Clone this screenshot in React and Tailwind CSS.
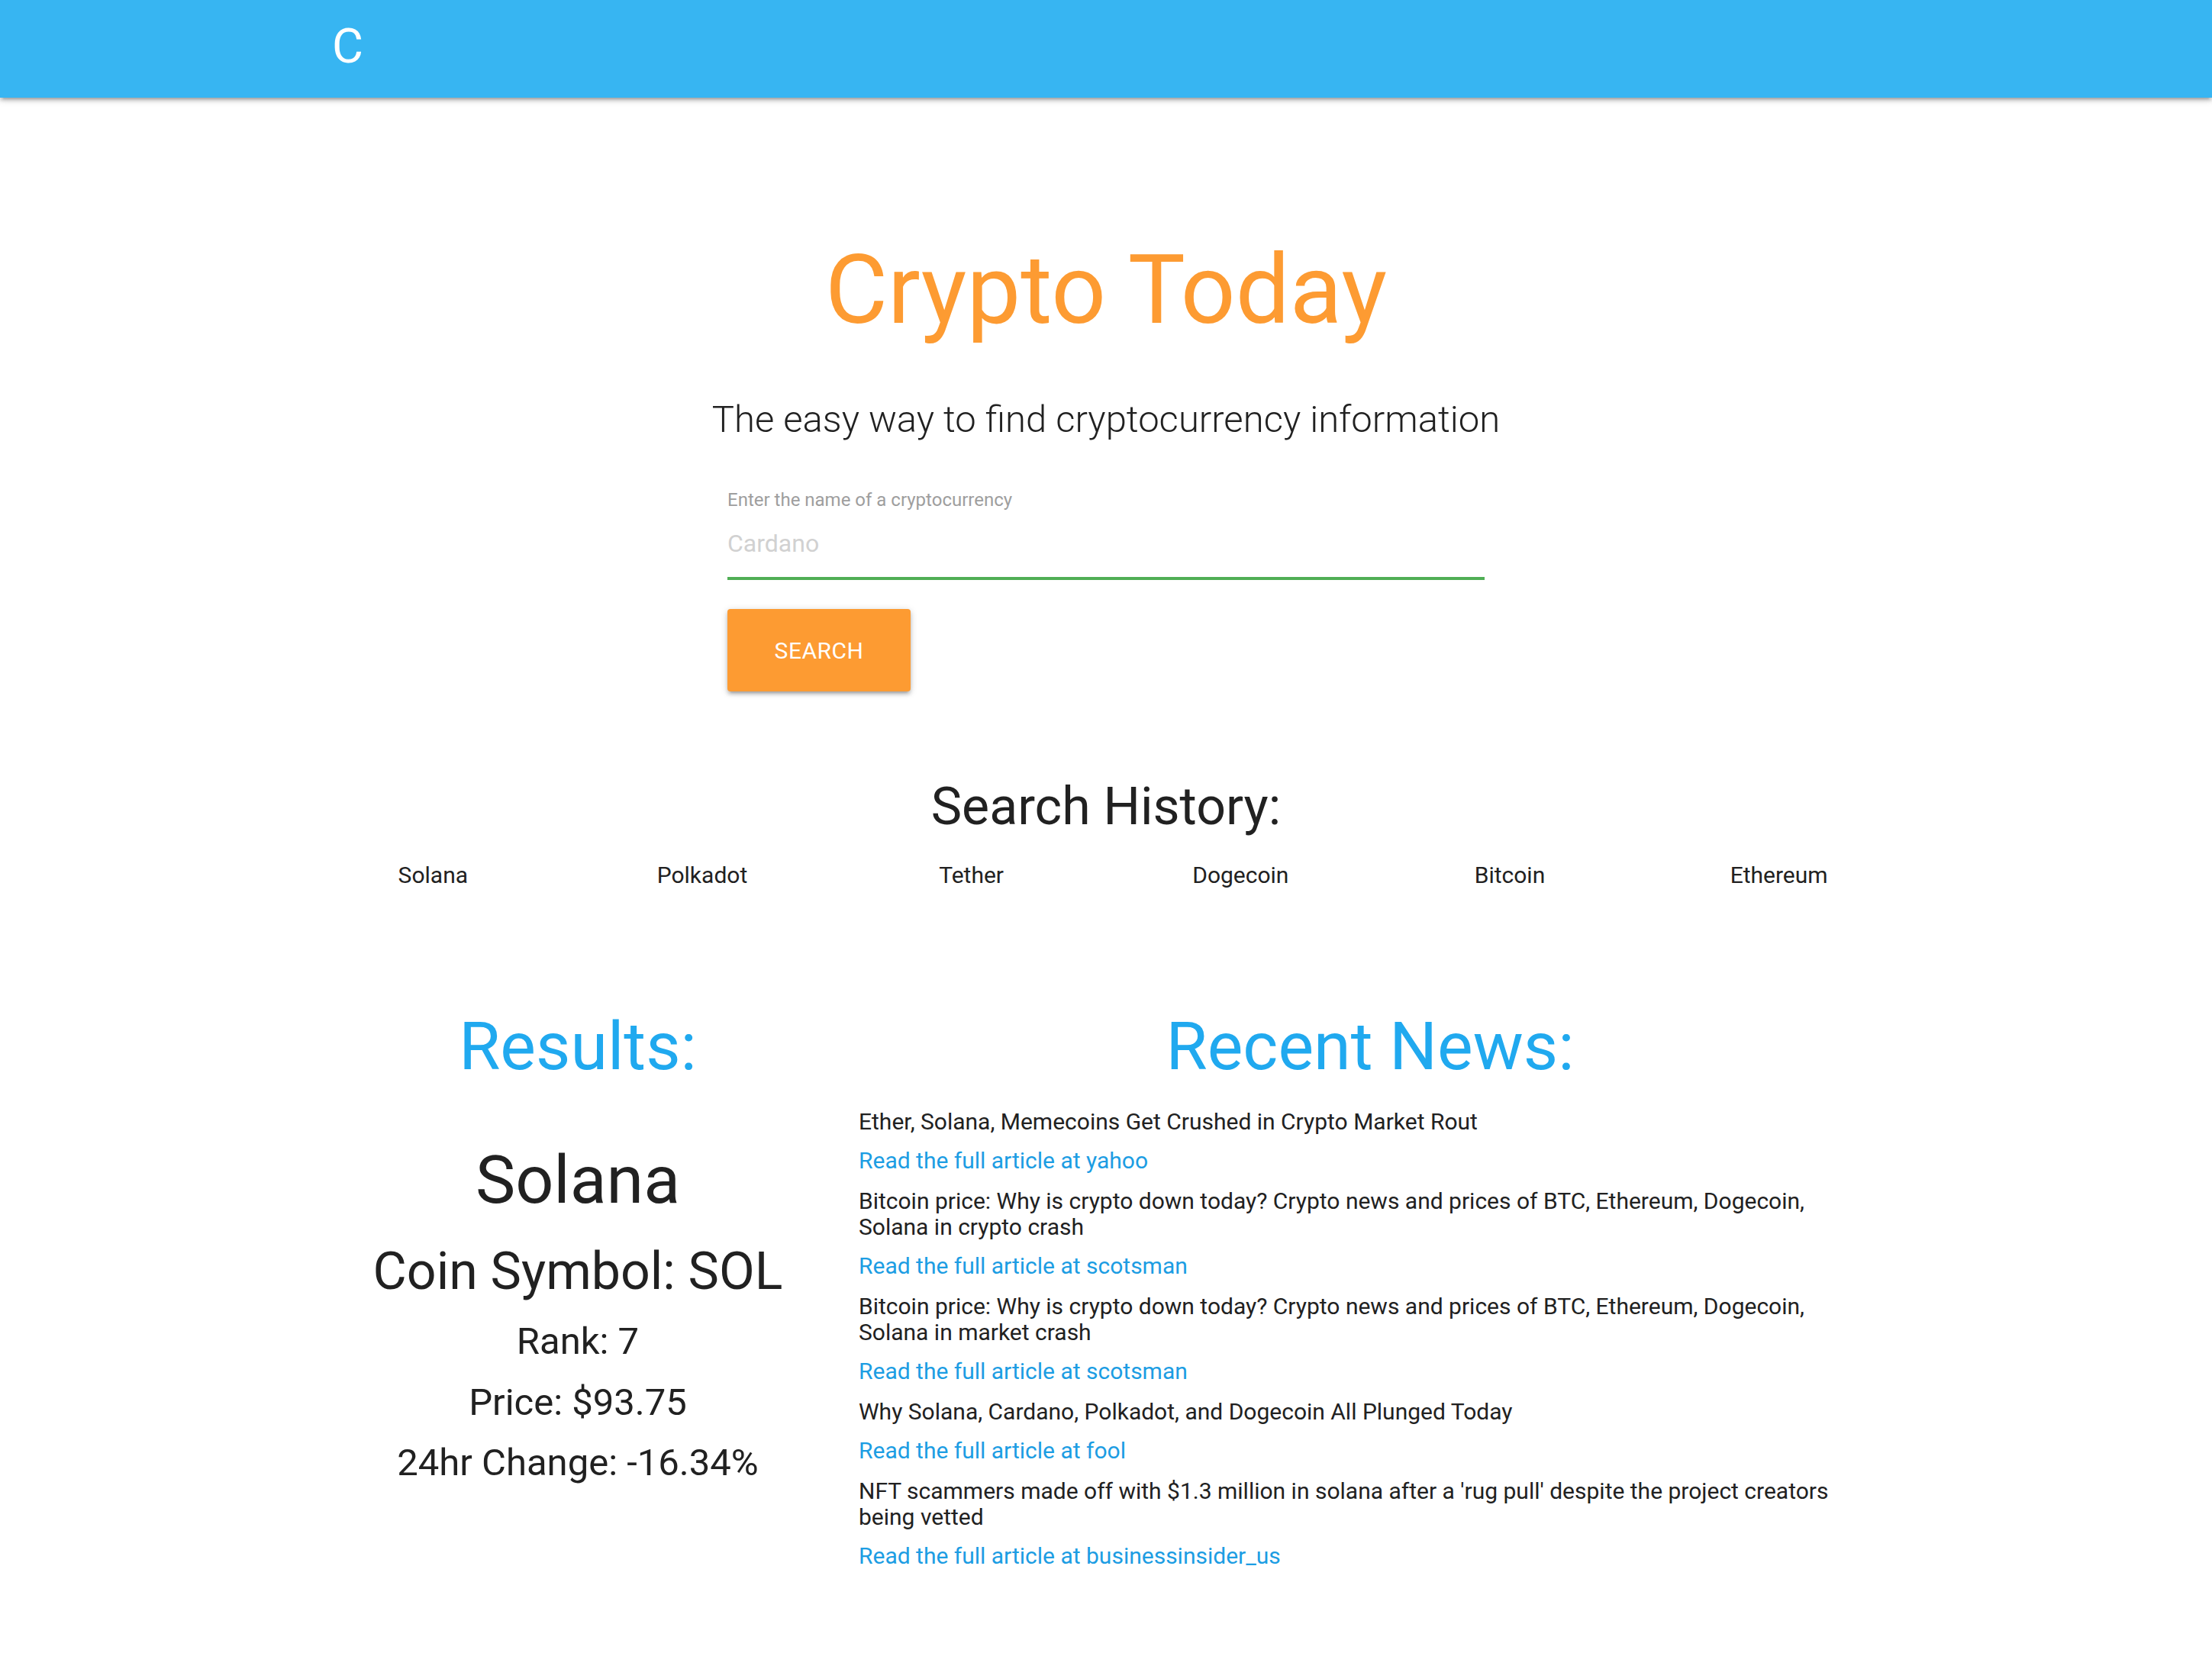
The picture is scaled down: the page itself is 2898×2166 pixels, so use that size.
const history = ["Solana", "Polkadot", "Tether", "Dogecoin", "Bitcoin", "Ethereum"];

const news = [
  { title: "Ether, Solana, Memecoins Get Crushed in Crypto Market Rout", source: "yahoo" },
  {
    title:
      "Bitcoin price: Why is crypto down today? Crypto news and prices of BTC, Ethereum, Dogecoin, Solana in crypto crash",
    source: "scotsman",
  },
  {
    title:
      "Bitcoin price: Why is crypto down today? Crypto news and prices of BTC, Ethereum, Dogecoin, Solana in market crash",
    source: "scotsman",
  },
  { title: "Why Solana, Cardano, Polkadot, and Dogecoin All Plunged Today", source: "fool" },
  {
    title:
      "NFT scammers made off with $1.3 million in solana after a 'rug pull' despite the project creators being vetted",
    source: "businessinsider_us",
  },
];

export default function App() {
  return (
    <div className="min-h-screen bg-white text-[#212121] font-['Roboto','Liberation_Sans',sans-serif]">
      {/* navbar */}
      <nav className="h-[128px] bg-[#37b5f2] shadow-[0_4px_4px_0_rgba(0,0,0,0.14),0_6px_2px_-4px_rgba(0,0,0,0.12),0_2px_10px_0_rgba(0,0,0,0.2)]">
        <div className="w-[2028px] mx-auto h-full flex items-center">
          <a href="#" className="pb-[8px] text-white text-[63px] leading-none">
            C
          </a>
        </div>
      </nav>

      {/* hero + search */}
      <div className="flex flex-col items-center">
        <h1 className="mt-[189px] text-[126px] leading-none text-[#fd9b32]">Crypto Today</h1>
        <h5 className="mt-[82px] text-[49px] leading-none font-light">
          The easy way to find cryptocurrency information
        </h5>

        <div className="w-[992px] mt-[69px]">
          <label className="block text-[24px] leading-none text-[#9e9e9e]">
            Enter the name of a cryptocurrency
          </label>
          <input
            type="text"
            placeholder="Cardano"
            className="block w-full h-[93px] border-b-4 border-[#50ae55] text-[32px] outline-none bg-transparent placeholder:text-[#d1d1d1]"
          />
          <button className="mt-[38px] w-[240px] h-[108px] rounded-[4px] bg-[#fd9b32] text-white text-[30px] uppercase tracking-[0.5px] shadow-[0_4px_4px_0_rgba(0,0,0,0.14),0_6px_2px_-4px_rgba(0,0,0,0.12),0_2px_10px_0_rgba(0,0,0,0.2)]">
            Search
          </button>
        </div>

        <h4 className="mt-[117px] text-[68px] leading-none">Search History:</h4>
      </div>

      <div className="w-[2116px] mx-auto mt-[41px] grid grid-cols-6 text-center text-[30px] leading-none">
        {history.map((coin) => (
          <div key={coin}>{coin}</div>
        ))}
      </div>

      {/* results + news */}
      <div className="w-[2076px] mx-auto mt-[165px] grid grid-cols-[692px_1384px] pb-[100px]">
        <div className="flex flex-col items-center text-center">
          <h3 className="text-[88px] leading-none text-[#20a9ef]">Results:</h3>
          <h3 className="mt-[87px] text-[88px] leading-none">Solana</h3>
          <h4 className="mt-[42px] text-[68px] leading-none">Coin Symbol: SOL</h4>
          <h5 className="mt-[33px] text-[49px] leading-none">Rank: 7</h5>
          <h5 className="mt-[31px] text-[49px] leading-none">Price: $93.75</h5>
          <h5 className="mt-[30px] text-[49px] leading-none">24hr Change: -16.34%</h5>
        </div>

        <div className="flex flex-col">
          <h3 className="text-center text-[88px] leading-none text-[#20a9ef]">Recent News:</h3>
          <div className="mt-[38px] pl-[22px] pr-[62px] flex flex-col gap-[19px] text-[30px] leading-[34px]">
            {news.map((item, i) => (
              <div key={i} className="flex flex-col gap-[17px]">
                <p>{item.title}</p>
                <a href="#" className="text-[#1c9de3]">
                  Read the full article at {item.source}
                </a>
              </div>
            ))}
          </div>
        </div>
      </div>
    </div>
  );
}
